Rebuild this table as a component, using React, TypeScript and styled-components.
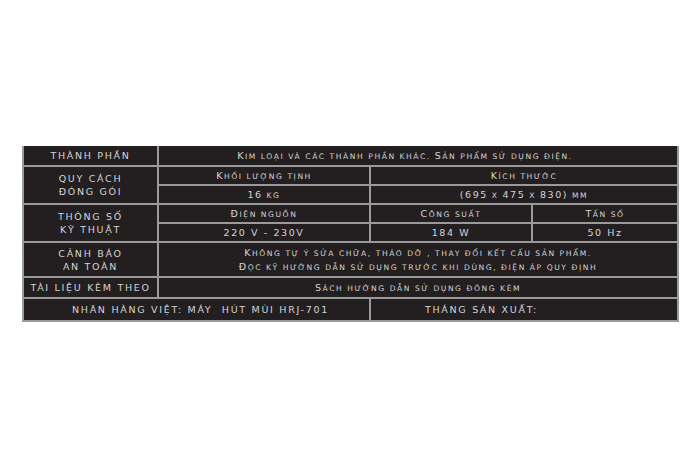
import React from "react";
import styled, { createGlobalStyle } from "styled-components";

const Global = createGlobalStyle`
  html, body { margin: 0; padding: 0; background: #ffffff; }
  body { width: 700px; height: 467px; overflow: hidden; }
`;

const Page = styled.div`
  padding: 146px 23px 0 22px;
  font-family: "DejaVu Sans", "Liberation Sans", sans-serif;
`;

const Table = styled.table`
  width: 655px;
  border-collapse: collapse;
  table-layout: fixed;
  background: #231f20;
  color: #d4d4d4;
`;

const Row = styled.tr<{ $h: number }>`
  height: ${(p) => p.$h}px;
`;

const Cell = styled.td<{ $top?: boolean; $align?: "left" | "center"; $pl?: number; $pr?: number }>`
  border: 2px solid #9a9a9a;
  ${(p) => (p.$top ? "border-top: none;" : "")}
  padding: 0 ${(p) => p.$pr ?? 0}px 0 ${(p) => p.$pl ?? 0}px;
  text-align: ${(p) => p.$align ?? "center"};
  vertical-align: middle;
  font-size: 9.5px;
  line-height: 13px;
  letter-spacing: 1.6px;
  white-space: nowrap;
  overflow: hidden;
`;

const Label = styled(Cell)`
  text-transform: uppercase;
  letter-spacing: 1.7px;
`;

const Value = styled(Cell)`
  font-size: 7.6px;
  letter-spacing: 1.55px;
  text-transform: uppercase;
`;

const Big = styled.span`
  font-size: 9.5px;
`;

function SmallCaps({ text }: { text: string }) {
  const parts: { big: boolean; s: string }[] = [];
  for (const ch of text) {
    const isLower = ch !== ch.toUpperCase() || ch === " " ? ch !== ch.toUpperCase() : false;
    const big = !isLower && ch !== " " && /[\p{Lu}\p{N}()]/u.test(ch);
    const last = parts[parts.length - 1];
    if (last && last.big === big) last.s += ch;
    else parts.push({ big, s: ch });
  }
  return (
    <>
      {parts.map((p, i) => (p.big ? <Big key={i}>{p.s}</Big> : <span key={i}>{p.s}</span>))}
    </>
  );
}

export default function App() {
  return (
    <>
      <Global />
      <Page>
        <Table>
          <colgroup>
            <col style={{ width: 135 }} />
            <col style={{ width: 212 }} />
            <col style={{ width: 162 }} />
            <col style={{ width: 146 }} />
          </colgroup>
          <tbody>
            <Row $h={20}>
              <Label $top>Thành phần</Label>
              <Value $top colSpan={3} $pr={26}>
                <SmallCaps text="Kim loại và các thành phần khác. Sản phẩm sử dụng điện." />
              </Value>
            </Row>
            <Row $h={19}>
              <Label rowSpan={2}>
                Quy cách
                <br />
                đóng gói
              </Label>
              <Value>
                <SmallCaps text="Khối lượng tịnh" />
              </Value>
              <Value colSpan={2}>
                <SmallCaps text="Kích thước" />
              </Value>
            </Row>
            <Row $h={19}>
              <Value>
                <SmallCaps text="16 kg" />
              </Value>
              <Value colSpan={2}>
                <SmallCaps text="(695 x 475 x 830) mm" />
              </Value>
            </Row>
            <Row $h={19}>
              <Label rowSpan={2}>
                Thông số
                <br />
                kỹ thuật
              </Label>
              <Value>
                <SmallCaps text="Điện nguồn" />
              </Value>
              <Value>
                <SmallCaps text="Công suất" />
              </Value>
              <Value>
                <SmallCaps text="Tấn số" />
              </Value>
            </Row>
            <Row $h={19}>
              <Cell>220 V - 230V</Cell>
              <Cell>184 W</Cell>
              <Cell>50 Hz</Cell>
            </Row>
            <Row $h={35}>
              <Label>
                Cảnh báo
                <br />
                an toàn
              </Label>
              <Value colSpan={3}>
                <SmallCaps text="Không tự ý sửa chữa, tháo dỡ , thay đổi kết cấu sản phẩm." />
                <br />
                <SmallCaps text="Đọc kỹ hướng dẫn sử dụng trước khi dùng, điện áp quy định" />
              </Value>
            </Row>
            <Row $h={21}>
              <Label>Tài liệu kèm theo</Label>
              <Value colSpan={3}>
                <SmallCaps text="Sách hướng dẫn sử dụng đóng kèm" />
              </Value>
            </Row>
            <Row $h={23}>
              <Label colSpan={2} $pl={8}>
                Nhãn hàng việt: Máy&nbsp; hút mùi HRJ-701
              </Label>
              <Label colSpan={2} $align="left" $pl={54}>
                Tháng sản xuất:
              </Label>
            </Row>
          </tbody>
        </Table>
      </Page>
    </>
  );
}
